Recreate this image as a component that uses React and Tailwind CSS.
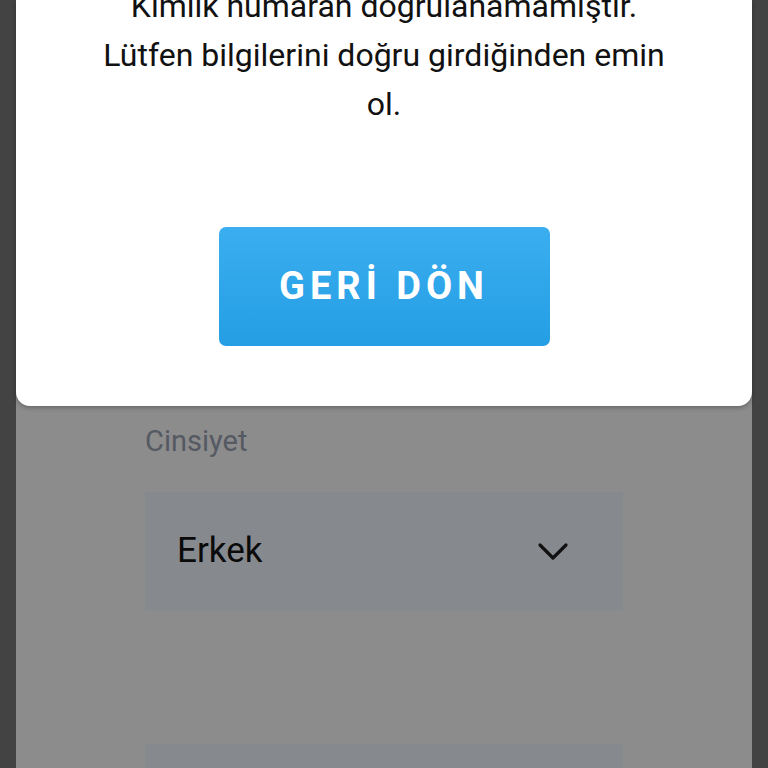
import React from "react";

function Chevron() {
  return (
    <svg width="32" height="20" viewBox="0 0 32 20" fill="none">
      <path d="M3 3 L16 16 L29 3" stroke="#111" strokeWidth="3.2" strokeLinecap="round" strokeLinejoin="round" />
    </svg>
  );
}

export default function App() {
  return (
    <div className="w-[768px] h-[768px] overflow-hidden bg-[#434343] flex justify-center" style={{ fontFamily: "Roboto, 'Noto Sans', sans-serif" }}>
      <div className="w-[736px] h-full bg-[#8c8c8c] flex flex-col">
        {/* alert dialog */}
        <div className="h-[406px] shrink-0 bg-white rounded-b-[14px] shadow-[0_2px_4px_rgba(0,0,0,0.25)] flex flex-col items-center">
          <p className="mt-[-18px] w-[620px] text-center text-[32px] leading-[49px] text-[#111]">
            Kimlik numaran doğrulanamamıştır.
            <br />
            Lütfen bilgilerini doğru girdiğinden emin
            <br />
            ol.
          </p>
          <button className="mt-[98px] w-[331px] h-[119px] rounded-[7px] bg-gradient-to-b from-[#3aaef0] to-[#249ee4] text-white text-[38px] font-bold tracking-[5px] flex items-center justify-center">
            GERİ DÖN
          </button>
        </div>

        {/* form behind the dialog */}
        <div className="px-[129px] flex flex-col">
          <label className="mt-[15px] text-[29px] leading-[40px] text-[#555962]">Cinsiyet</label>
          <div className="mt-[31px] h-[119px] bg-[#86898e] flex items-center justify-between pl-[32px] pr-[54px]">
            <span className="text-[35px] text-[#0a0a0a]">Erkek</span>
            <Chevron />
          </div>
          <div className="mt-[133px] h-[60px] bg-[#86898e]" />
        </div>
      </div>
    </div>
  );
}
